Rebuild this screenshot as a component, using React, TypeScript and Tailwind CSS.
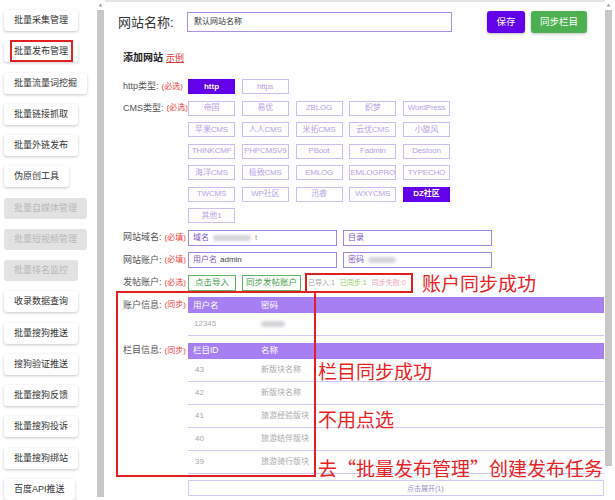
import React from 'react';

interface NavItem {
  label: string;
  disabled?: boolean;
  marked?: boolean;
}

const NAV: NavItem[] = [
  { label: '批量采集管理' },
  { label: '批量发布管理', marked: true },
  { label: '批量流量词挖掘' },
  { label: '批量链接抓取' },
  { label: '批量外链发布' },
  { label: '伪原创工具' },
  { label: '批量自媒体管理', disabled: true },
  { label: '批量短视频管理', disabled: true },
  { label: '批量排名监控', disabled: true },
  { label: '收录数据查询' },
  { label: '批量搜狗推送' },
  { label: '搜狗验证推送' },
  { label: '批量搜狗反馈' },
  { label: '批量搜狗投诉' },
  { label: '批量搜狗绑站' },
  { label: '百度API推送' },
];

const CMS: string[][] = [
  ['帝国', '易优', 'ZBLOG', '织梦', 'WordPress'],
  ['苹果CMS', '人人CMS', '米拓CMS', '云优CMS', '小旋风'],
  ['THINKCMF', 'PHPCMSV9', 'PBoot', 'Fadmin', 'Destoon'],
  ['海洋CMS', '极致CMS', 'EMLOG', 'EMLOGPRO', 'TYPECHO'],
  ['TWCMS', 'WP社区', '迅睿', 'WXYCMS', 'DZ社区'],
  ['其他1'],
];

const COLUMNS = [
  { id: '43', name: '新版块名称' },
  { id: '42', name: '新版块名称' },
  { id: '41', name: '旅游经验版块' },
  { id: '40', name: '旅游结伴版块' },
  { id: '39', name: '旅游骑行版块' },
];

const Chip = ({ text, active }: { text: string; active?: boolean }) => (
  <div
    className={
      active
        ? 'w-[47px] h-[15px] flex items-center justify-center bg-[#6200ea] border border-[#6200ea] text-white text-[8px] font-bold leading-none whitespace-nowrap'
        : 'w-[47px] h-[15px] flex items-center justify-center border border-[#cdbdf3] text-[#b7a2e8] text-[8px] leading-none whitespace-nowrap tracking-[-0.2px]'
    }
  >
    {text}
  </div>
);

const Label = ({ name, note }: { name: string; note: string }) => (
  <div className="w-[65px] shrink-0 h-[15px] flex items-center text-[9px] leading-none whitespace-nowrap">
    <span className="text-[#555]">{name}</span>
    <span className="text-[#f23c3c] text-[8px] ml-[3px]">{note}</span>
  </div>
);

const Blur = ({ w }: { w: number }) => (
  <span className="inline-block h-[6px] rounded-full bg-[#d4d4d8] blur-[1.5px]" style={{ width: w }} />
);

const Scrollbar = ({ thumbEnd }: { thumbEnd: string }) => (
  <div className="w-[7px] h-full flex flex-col items-center bg-white">
    <div className="h-[10px] flex items-center justify-center">
      <svg width="5" height="4" viewBox="0 0 5 4">
        <path d="M2.5 0.5 L4.5 3.5 L0.5 3.5 Z" fill="#a3a3a3" />
      </svg>
    </div>
    <div className={`w-[7px] bg-[#c7c7c7] ${thumbEnd}`} />
  </div>
);

export default function App() {
  return (
    <div className="w-[615px] h-[500px] overflow-hidden bg-white flex font-['Liberation_Sans','Noto_Sans_CJK_SC',sans-serif]">
      {/* Sidebar */}
      <aside className="w-[97px] shrink-0 flex flex-col items-start gap-[10.3px] pt-[10px] pl-[4px]">
        {NAV.map((item) => (
          <div
            key={item.label}
            className={
              item.disabled
                ? 'relative h-[21px] px-[10px] flex items-center rounded-[3px] bg-[#e2e2e2] text-[#b8b8b8] text-[9px] leading-none whitespace-nowrap'
                : 'relative h-[21px] px-[10px] flex items-center rounded-[3px] bg-white text-[#333] text-[9px] leading-none whitespace-nowrap shadow-[0_1px_3px_rgba(0,0,0,0.22)]'
            }
          >
            {item.label}
            {item.marked && (
              <span className="absolute left-[6px] w-[63px] -top-[1px] bottom-0 border-2 border-[#e32222]" />
            )}
          </div>
        ))}
      </aside>

      <div className="w-[8px] shrink-0 h-full">
        <Scrollbar thumbEnd="h-[487px]" />
      </div>

      {/* Main */}
      <main className="w-[500px] shrink-0 h-full flex flex-col border-t-2 border-[#e6e6e6]">
        {/* Top bar */}
        <div className="flex items-center h-[22px] mt-[9px] pl-[13px] pr-[18px]">
          <span className="w-[69px] text-[13px] leading-none text-[#333]">网站名称:</span>
          <div className="w-[265px] h-[20px] border border-[#a88ee6] flex items-center pl-[6px] text-[8px] leading-none text-[#333]">
            默认网站名称
          </div>
          <div className="flex-1" />
          <button className="w-[38px] h-[22px] rounded-[3px] bg-[#6200ea] text-white text-[9.5px] leading-none shadow-[0_1px_3px_rgba(0,0,0,0.25)]">
            保存
          </button>
          <button className="ml-[6px] w-[56px] h-[22px] rounded-[3px] bg-[#4caf50] text-white text-[9.5px] leading-none shadow-[0_1px_3px_rgba(0,0,0,0.25)]">
            同步栏目
          </button>
        </div>

        <div className="mt-[20px] pl-[18px] flex items-end h-[10px] leading-none">
          <span className="text-[10px] font-bold text-[#222]">添加网站</span>
          <span className="ml-[3px] text-[9px] text-[#e53935] underline">示例</span>
        </div>

        <div className="mt-[16px] pl-[18px] flex flex-col gap-[6.5px]">
          {/* http */}
          <div className="flex">
            <Label name="http类型:" note="(必选)" />
            <div className="flex gap-[6.75px]">
              <Chip text="http" active />
              <Chip text="https" />
            </div>
          </div>

          {/* CMS */}
          <div className="flex items-start">
            <Label name="CMS类型:" note="(必选)" />
            <div className="grid grid-cols-[repeat(5,47px)] gap-x-[6.75px] gap-y-[6.5px]">
              {CMS.flat().map((c) => (
                <Chip key={c} text={c} active={c === 'DZ社区'} />
              ))}
            </div>
          </div>

          {/* domain */}
          <div className="flex items-center h-[16px]">
            <Label name="网站域名:" note="(必填)" />
            <div className="flex gap-[6px] text-[8px] leading-none">
              <div className="w-[149px] h-[16px] border border-[#9f86e2] flex items-center gap-[4px] pl-[4px]">
                <span className="text-[#7e57c2]">域名</span>
                <Blur w={38} />
                <span className="text-[#999]">t</span>
              </div>
              <div className="w-[149px] h-[16px] border border-[#9f86e2] flex items-center pl-[4px]">
                <span className="text-[#7e57c2]">目录</span>
              </div>
            </div>
          </div>

          {/* account */}
          <div className="flex items-center h-[16px]">
            <Label name="网站账户:" note="(必填)" />
            <div className="flex gap-[6px] text-[8px] leading-none">
              <div className="w-[149px] h-[16px] border border-[#9f86e2] flex items-center gap-[3px] pl-[4px]">
                <span className="text-[#7e57c2]">用户名</span>
                <span className="text-[#444]">admin</span>
              </div>
              <div className="w-[149px] h-[16px] border border-[#9f86e2] flex items-center gap-[4px] pl-[4px]">
                <span className="text-[#7e57c2]">密码</span>
                <Blur w={28} />
              </div>
            </div>
          </div>

          {/* post account */}
          <div className="flex items-center h-[16px]">
            <Label name="发帖账户:" note="(必选)" />
            <div className="flex items-center text-[8.5px] leading-none whitespace-nowrap">
              <div className="w-[48px] h-[16px] border border-[#5cb660] text-[#43a047] flex items-center justify-center">
                点击导入
              </div>
              <div className="ml-[6px] w-[59px] h-[16px] border border-[#5cb660] text-[#43a047] flex items-center justify-center">
                同步发帖账户
              </div>
              <div className="ml-[4px] w-[108px] h-[20px] border-2 border-[#e02020] flex items-center gap-[5px] pl-[1px] text-[7px] overflow-hidden">
                <span className="text-[#a8a8a8]">已导入:1</span>
                <span className="text-[#9ccc65]">已同步:1</span>
                <span className="text-[#f4a1b5]">同步失败:0</span>
              </div>
              <span className="ml-[9px] text-[19px] leading-none text-[#e8231f] font-['Noto_Sans_CJK_SC',sans-serif]">
                账户同步成功
              </span>
            </div>
          </div>

          {/* account info + column info */}
          <div className="relative flex flex-col gap-[6.5px]">
            <div className="flex items-start">
              <div className="h-[16px] flex items-center">
                <Label name="账户信息:" note="(同步)" />
              </div>
              <div className="w-[416px]">
                <div className="h-[16px] bg-[#a77ff2] text-white text-[8.5px] leading-none flex items-center">
                  <span className="w-[73px] pl-[5px]">用户名</span>
                  <span>密码</span>
                </div>
                <div className="h-[23px] border-b border-[#d6c8f6] text-[8px] leading-none text-[#aaa] flex items-center">
                  <span className="w-[73px] pl-[6px]">12345</span>
                  <Blur w={24} />
                </div>
              </div>
            </div>

            <div className="flex items-start">
              <div className="h-[16px] flex items-center">
                <Label name="栏目信息:" note="(同步)" />
              </div>
              <div className="w-[416px]">
                <div className="h-[16px] bg-[#a77ff2] text-white text-[8.5px] leading-none flex items-center">
                  <span className="w-[73px] pl-[5px]">栏目ID</span>
                  <span>名称</span>
                </div>
                {COLUMNS.map((c) => (
                  <div
                    key={c.id}
                    className="h-[23px] border-b border-[#d6c8f6] text-[8px] leading-none text-[#aaa] flex items-center"
                  >
                    <span className="w-[73px] pl-[7px]">{c.id}</span>
                    <span>{c.name}</span>
                  </div>
                ))}
              </div>
            </div>

            {/* annotations */}
            <span className="absolute left-[-7px] top-[-6px] w-[200px] bottom-[-3px] border-2 border-[#e02020]" />
            <div className="absolute left-[195px] top-0 font-['Noto_Sans_CJK_SC',sans-serif] text-[19px] leading-none text-[#e8231f] whitespace-nowrap">
              <div className="absolute top-[64px]">栏目同步成功</div>
              <div className="absolute top-[112px]">不用点选</div>
              <div className="absolute top-[161px]">去“批量发布管理”创建发布任务</div>
            </div>
          </div>

          {/* expand */}
          <div className="flex">
            <div className="w-[65px] shrink-0" />
            <div className="w-[416px] h-[16px] border border-[#d6c8f6] flex items-center pl-[218px] text-[7px] leading-none text-[#9d92d6]">
              点击展开(1)
            </div>
          </div>
        </div>
      </main>

      <div className="w-[7px] shrink-0 h-full">
        <Scrollbar thumbEnd="h-[456px]" />
      </div>
      <div className="flex-1" />
    </div>
  );
}
